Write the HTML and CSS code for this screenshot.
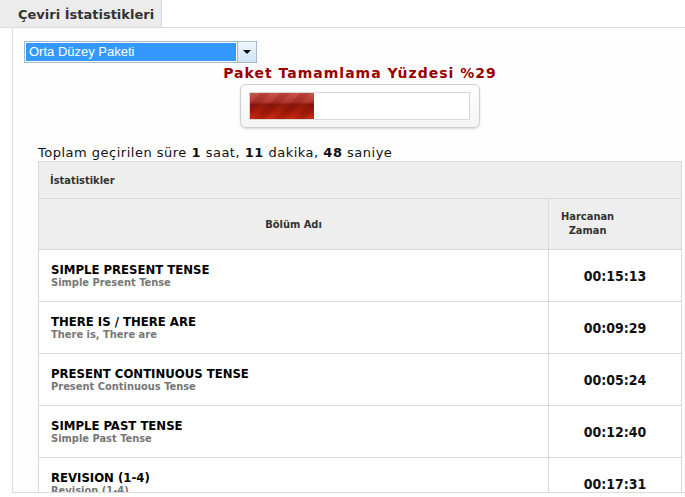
FILE: index.html
```html
<!DOCTYPE html>
<html lang="tr">
<head>
<meta charset="utf-8">
<title>Çeviri İstatistikleri</title>
<link rel="stylesheet" href="styles.css">
</head>
<body>
<div class="tabs">
  <div class="tab">Çeviri İstatistikleri</div>
</div>
<div class="panel">
  <div class="picker">
    <div class="picker-value">Orta Düzey Paketi</div>
    <div class="picker-btn"><span class="caret"></span></div>
  </div>
  <div class="content">
    <div class="progress-title">Paket Tamamlama Yüzdesi %29</div>
    <div class="progress">
      <div class="progress-track">
        <div class="progress-fill" style="width: 29%"></div>
      </div>
    </div>
    <div class="total">Toplam geçirilen süre <b>1</b> saat, <b>11</b> dakika, <b>48</b> saniye</div>
    <table class="stats">
      <thead>
        <tr class="caption-row"><th colspan="2">İstatistikler</th></tr>
        <tr class="head-row">
          <th class="col-name">Bölüm Adı</th>
          <th class="col-time"><span class="time-head">Harcanan<br>Zaman</span></th>
        </tr>
      </thead>
      <tbody>
        <tr>
          <td class="col-name"><div class="unit">SIMPLE PRESENT TENSE</div><div class="sub">Simple Present Tense</div></td>
          <td class="col-time">00:15:13</td>
        </tr>
        <tr>
          <td class="col-name"><div class="unit">THERE IS / THERE ARE</div><div class="sub">There is, There are</div></td>
          <td class="col-time">00:09:29</td>
        </tr>
        <tr>
          <td class="col-name"><div class="unit">PRESENT CONTINUOUS TENSE</div><div class="sub">Present Continuous Tense</div></td>
          <td class="col-time">00:05:24</td>
        </tr>
        <tr>
          <td class="col-name"><div class="unit">SIMPLE PAST TENSE</div><div class="sub">Simple Past Tense</div></td>
          <td class="col-time">00:12:40</td>
        </tr>
        <tr>
          <td class="col-name"><div class="unit">REVISION (1-4)</div><div class="sub">Revision (1-4)</div></td>
          <td class="col-time">00:17:31</td>
        </tr>
      </tbody>
    </table>
  </div>
</div>
</body>
</html>
```
FILE: styles.css
```css
html, body {
  margin: 0;
  padding: 0;
  background: #fff;
}

body {
  font-family: "DejaVu Sans", Verdana, sans-serif;
  color: #111;
  overflow: hidden;
}

.tabs {
  height: 27px;
  border-bottom: 1px solid #dcdcdc;
  display: flex;
}

.tab {
  width: 162px;
  background: #ececec;
  border-right: 1px solid #d6d6d6;
  font-family: "DejaVu Sans", Verdana, sans-serif;
  font-weight: bold;
  font-size: 13px;
  color: #333;
  line-height: 29px;
  padding-left: 18px;
  box-sizing: border-box;
}

.panel {
  margin-left: 12px;
  border-left: 1px solid #dcdcdc;
  border-bottom: 1px solid #dcdcdc;
  height: 465px;
  overflow: hidden;
  background: #fdfdfd;
  box-sizing: border-box;
}

.picker {
  margin: 13px 0 0 11px;
  width: 233px;
  height: 22px;
  display: flex;
  border: 1px solid #a8b8c8;
  box-sizing: border-box;
  background: #fff;
}

.picker-value {
  flex: 1;
  margin: 1px;
  background: #3399ff;
  color: #fff;
  font-family: "Liberation Sans", Arial, sans-serif;
  font-size: 13px;
  line-height: 18px;
  padding-left: 3px;
}

.picker-btn {
  width: 18px;
  border-left: 1px solid #9fb6cc;
  background: linear-gradient(#eef6fd, #cfe4f6);
  display: flex;
  align-items: center;
  justify-content: center;
}

.caret {
  width: 0;
  height: 0;
  border-left: 4px solid transparent;
  border-right: 4px solid transparent;
  border-top: 4px solid #000;
}

.content {
  padding-left: 25px;
  width: 644px;
}

.progress-title {
  text-align: center;
  color: #990000;
  font-weight: bold;
  font-size: 14px;
  letter-spacing: 1px;
  line-height: 18px;
  margin-top: 1px;
}

.progress {
  width: 240px;
  height: 44px;
  margin: 2px auto 0;
  border: 1px solid #cfcfcf;
  border-radius: 6px;
  box-sizing: border-box;
  box-shadow: 0 1px 2px rgba(0, 0, 0, 0.15);
  background: linear-gradient(#fff, #f4f4f4);
  padding: 7px 9px 7px 8px;
}

.progress-track {
  height: 100%;
  border: 1px solid #d8d8d8;
  background: #fff;
  box-sizing: border-box;
}

.progress-fill {
  height: 100%;
  background:
    repeating-linear-gradient(-45deg, rgba(0, 0, 0, 0) 0 7px, rgba(90, 0, 0, 0.18) 7px 14px),
    linear-gradient(#c9544a 0%, #b2382d 35%, #8e1a0c 45%, #a81c08 70%, #c42a10 100%);
}

.total {
  font-size: 13px;
  letter-spacing: 0.5px;
  line-height: 15px;
  margin-top: 17px;
  color: #111;
}

.stats {
  width: 644px;
  margin-top: 1px;
  border-collapse: collapse;
  font-family: "DejaVu Sans Condensed", "DejaVu Sans", sans-serif;
}

.stats th,
.stats td {
  border: 1px solid #d9d9d9;
}

.caption-row th {
  background: #eeeeee;
  text-align: left;
  font-size: 11px;
  color: #333;
  height: 36px;
  padding: 0 0 0 11px;
}

.head-row th {
  background: #eeeeee;
  font-size: 11px;
  color: #333;
  height: 50px;
  padding: 0;
}

.head-row .col-time {
  text-align: left;
  padding-left: 12px;
}

.time-head {
  display: inline-block;
  text-align: center;
  line-height: 14px;
}

.col-name {
  width: 497px;
}

.stats td {
  background: #fff;
  height: 51px;
  padding: 0 0 0 12px;
}

.unit {
  font-weight: bold;
  font-size: 13px;
  line-height: 15px;
  color: #000;
}

.sub {
  font-weight: bold;
  font-size: 11px;
  line-height: 12px;
  color: #777;
}

.stats td.col-time {
  text-align: center;
  font-weight: bold;
  font-size: 14px;
  padding: 0;
}
```
